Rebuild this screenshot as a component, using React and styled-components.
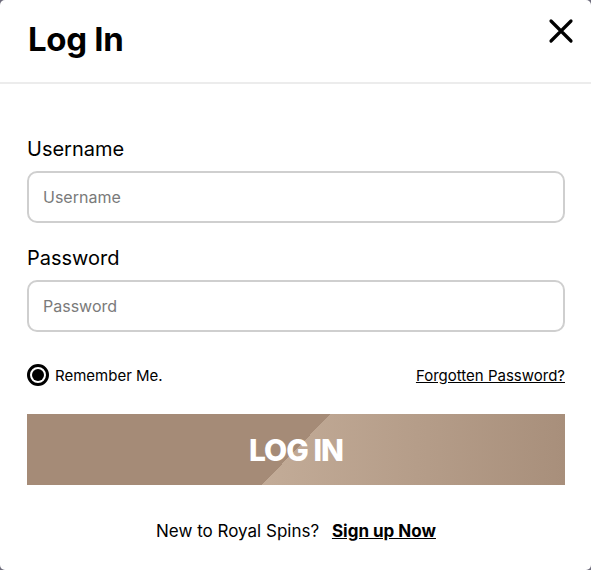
import styled, { createGlobalStyle } from "styled-components";

const GlobalStyle = createGlobalStyle`
  html, body {
    margin: 0;
    padding: 0;
    background: #6e6c7c;
  }
  * { box-sizing: border-box; }
`;

const FONT = `"Inter", "Noto Sans", "Liberation Sans", sans-serif`;

const App = () => {
  return (
    <>
      <GlobalStyle />
      <Modal>
        <Header>
          <Title>Log In</Title>
          <CloseButton aria-label="close">
            <svg width="26" height="26" viewBox="0 0 26 26">
              <path
                d="M3 3 L23 23 M23 3 L3 23"
                stroke="#000"
                strokeWidth="3.2"
                strokeLinecap="round"
              />
            </svg>
          </CloseButton>
        </Header>

        <Body>
          <Field>
            <Label>Username</Label>
            <Input placeholder="Username" />
          </Field>
          <Field>
            <Label>Password</Label>
            <Input type="password" placeholder="Password" />
          </Field>

          <OptionsRow>
            <Remember>
              <Radio />
              Remember Me.
            </Remember>
            <Forgot href="#">Forgotten Password?</Forgot>
          </OptionsRow>

          <LoginButton>LOG IN</LoginButton>

          <SignUp>
            New to Royal Spins? <SignUpLink href="#">Sign up Now</SignUpLink>
          </SignUp>
        </Body>
      </Modal>
    </>
  );
};

const Modal = styled.div`
  width: 591px;
  height: 570px;
  background: #fff;
  border-radius: 5px;
  font-family: ${FONT};
  color: #000;
  overflow: hidden;
`;

const Header = styled.div`
  height: 84px;
  display: flex;
  align-items: center;
  justify-content: space-between;
  padding: 0 17px 4px 28px;
  border-bottom: 2px solid #ececec;
`;

const Title = styled.h1`
  margin: 0;
  font-size: 33px;
  font-weight: 700;
  letter-spacing: -0.3px;
`;

const CloseButton = styled.button`
  border: none;
  background: none;
  padding: 0;
  display: flex;
  margin-top: -16px;
  cursor: pointer;
`;

const Body = styled.div`
  padding: 52px 26px 0 27px;
  display: flex;
  flex-direction: column;
`;

const Field = styled.div`
  display: flex;
  flex-direction: column;
  margin-bottom: 22px;
`;

const Label = styled.label`
  font-size: 20px;
  line-height: 26px;
  margin-bottom: 9px;
`;

const Input = styled.input`
  height: 52px;
  border: 2px solid #cfcfcf;
  border-radius: 10px;
  padding: 0 14px;
  font-family: ${FONT};
  font-size: 16px;
  outline: none;
  &::placeholder {
    color: #7a7a7a;
  }
`;

const OptionsRow = styled.div`
  display: flex;
  align-items: center;
  justify-content: space-between;
  margin-top: 3px;
  height: 36px;
`;

const Remember = styled.label`
  display: flex;
  align-items: center;
  gap: 6px;
  font-size: 15px;
`;

const Radio = styled.span`
  width: 22px;
  height: 22px;
  border-radius: 50%;
  border: 3px solid #000;
  display: flex;
  align-items: center;
  justify-content: center;
  &::after {
    content: "";
    width: 12px;
    height: 12px;
    border-radius: 50%;
    background: #000;
  }
`;

const Forgot = styled.a`
  color: #000;
  font-size: 15px;
  text-decoration: underline;
`;

const LoginButton = styled.button`
  margin-top: 21px;
  height: 71px;
  border: none;
  color: #fff;
  font-family: ${FONT};
  font-size: 30px;
  font-weight: 800;
  letter-spacing: -1px;
  cursor: pointer;
  background: linear-gradient(
      134deg,
      #a58b77 0%,
      #a58b77 50%,
      rgba(255, 255, 255, 0) 50%
    ),
    linear-gradient(90deg, #c2ab97 45%, #a88f7b 100%);
`;

const SignUp = styled.p`
  margin: 36px 0 0;
  text-align: center;
  font-size: 17px;
`;

const SignUpLink = styled.a`
  color: #000;
  font-weight: 700;
  margin-left: 8px;
  text-decoration: underline;
`;

export default App;
